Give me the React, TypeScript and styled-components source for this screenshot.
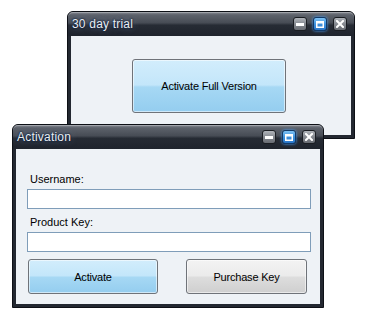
import React from 'react';
import styled, { createGlobalStyle } from 'styled-components';

const GlobalStyle = createGlobalStyle`
    html, body {
        margin: 0;
        padding: 0;
        background: #ffffff;
        font-family: 'Liberation Sans', Arial, sans-serif;
    }
`;

const Desktop = styled.div`
    position: relative;
    width: 366px;
    height: 318px;
    overflow: hidden;
    background: #ffffff;
`;

const WindowFrame = styled.div<{ $left: number; $top: number; $width: number; $height: number; $z: number }>`
    position: absolute;
    left: ${(p) => p.$left}px;
    top: ${(p) => p.$top}px;
    width: ${(p) => p.$width}px;
    height: ${(p) => p.$height}px;
    z-index: ${(p) => p.$z};
    box-sizing: border-box;
    display: flex;
    flex-direction: column;
    border: 1px solid #0d1016;
    border-radius: 6px 6px 0 0;
    background: #232831;
    padding: 0 3px 3px 3px;
`;

const TitleBar = styled.div`
    height: 24px;
    margin: 0 -3px;
    padding: 0 7px 0 4px;
    display: flex;
    align-items: center;
    border-radius: 5px 5px 0 0;
    background: linear-gradient(
        #8a8e96 0%,
        #5d626b 12%,
        #474c55 45%,
        #262b34 55%,
        #1f242d 100%
    );
    box-shadow: inset 0 1px 0 rgba(255, 255, 255, 0.25);
`;

const Title = styled.span`
    flex: 1;
    font-size: 12px;
    color: #e8edf4;
    letter-spacing: 0.2px;
    text-shadow: 0 0 2px #0b1a30, 0 0 2px #0b1a30, 0 0 6px rgba(110, 140, 190, 0.8);
`;

const Controls = styled.div`
    display: flex;
    gap: 6px;
`;

const CaptionButton = styled.div<{ $blue?: boolean }>`
    width: 14px;
    height: 14px;
    box-sizing: border-box;
    border-radius: 3px;
    border: 1px solid ${(p) => (p.$blue ? '#123a68' : '#1a1d22')};
    background: ${(p) =>
        p.$blue
            ? 'linear-gradient(#7fc3f5 0%, #3f93df 50%, #2a76c8 100%)'
            : 'linear-gradient(#b0b4ba 0%, #858990 50%, #686c73 100%)'};
    box-shadow: ${(p) => (p.$blue ? '0 0 3px #4aa3ff' : 'none')};
    display: flex;
    align-items: center;
    justify-content: center;
`;

const Content = styled.div`
    flex: 1;
    background: #eef2f6;
`;

const TrialContent = styled(Content)`
    padding: 23px 0 0 61px;
`;

const ActivationContent = styled(Content)`
    padding: 24px 10px 0 11px;
    display: flex;
    flex-direction: column;
`;

const Button = styled.button<{ $variant: 'blue' | 'gray'; $width: number; $height: number }>`
    width: ${(p) => p.$width}px;
    height: ${(p) => p.$height}px;
    box-sizing: border-box;
    border: 1px solid #6f7379;
    border-radius: 3px;
    font-family: 'Liberation Sans', Arial, sans-serif;
    font-size: 11px;
    letter-spacing: -0.2px;
    color: #000;
    padding: 0;
    box-shadow: inset 0 0 0 1px rgba(255, 255, 255, 0.55);
    background: ${(p) =>
        p.$variant === 'blue'
            ? 'linear-gradient(#d2edfc 0%, #c3e6fa 48%, #a6d8f4 52%, #94cdef 100%)'
            : 'linear-gradient(#f3f3f3 0%, #ebebeb 48%, #dddddd 52%, #cfcfcf 100%)'};
`;

const Label = styled.div<{ $gap: number }>`
    font-size: 11px;
    line-height: 13px;
    padding-left: 3px;
    margin-top: ${(p) => p.$gap}px;
    color: #000;
`;

const Input = styled.input`
    display: block;
    width: 284px;
    height: 20px;
    box-sizing: border-box;
    margin: 3px 0 0 0;
    border: 1px solid #7f9db9;
    background: #ffffff;
    outline: none;
`;

const ButtonRow = styled.div`
    display: flex;
    justify-content: space-between;
    margin: 7px 3px 0 1px;
`;

const MinimizeGlyph = () => (
    <svg width="8" height="8" viewBox="0 0 8 8">
        <rect x="0" y="3" width="8" height="3" fill="#ffffff" />
    </svg>
);

const MaximizeGlyph = () => (
    <svg width="8" height="7" viewBox="0 0 8 7">
        <rect x="0.75" y="0.75" width="6.5" height="5.5" fill="none" stroke="#ffffff" strokeWidth="1.5" />
        <rect x="1" y="1" width="6" height="1.5" fill="#ffffff" />
    </svg>
);

const CloseGlyph = () => (
    <svg width="8" height="8" viewBox="0 0 8 8">
        <path d="M1 1 L7 7 M7 1 L1 7" stroke="#ffffff" strokeWidth="2" strokeLinecap="square" />
    </svg>
);

type WindowProps = {
    title: string;
    left: number;
    top: number;
    width: number;
    height: number;
    z: number;
    children: React.ReactNode;
};

const Window = ({ title, left, top, width, height, z, children }: WindowProps): JSX.Element => (
    <WindowFrame $left={left} $top={top} $width={width} $height={height} $z={z}>
        <TitleBar>
            <Title>{title}</Title>
            <Controls>
                <CaptionButton>
                    <MinimizeGlyph />
                </CaptionButton>
                <CaptionButton $blue>
                    <MaximizeGlyph />
                </CaptionButton>
                <CaptionButton>
                    <CloseGlyph />
                </CaptionButton>
            </Controls>
        </TitleBar>
        {children}
    </WindowFrame>
);

const App = (): JSX.Element => {
    return (
        <>
            <GlobalStyle />
            <Desktop>
                <Window title="30 day trial" left={67} top={11} width={288} height={128} z={1}>
                    <TrialContent>
                        <Button $variant="blue" $width={154} $height={54}>
                            Activate Full Version
                        </Button>
                    </TrialContent>
                </Window>
                <Window title="Activation" left={12} top={124} width={312} height={184} z={2}>
                    <ActivationContent>
                        <Label $gap={0}>Username:</Label>
                        <Input type="text" />
                        <Label $gap={7}>Product Key:</Label>
                        <Input type="text" />
                        <ButtonRow>
                            <Button $variant="blue" $width={130} $height={35}>
                                Activate
                            </Button>
                            <Button $variant="gray" $width={121} $height={35}>
                                Purchase Key
                            </Button>
                        </ButtonRow>
                    </ActivationContent>
                </Window>
            </Desktop>
        </>
    );
};

export default App;
